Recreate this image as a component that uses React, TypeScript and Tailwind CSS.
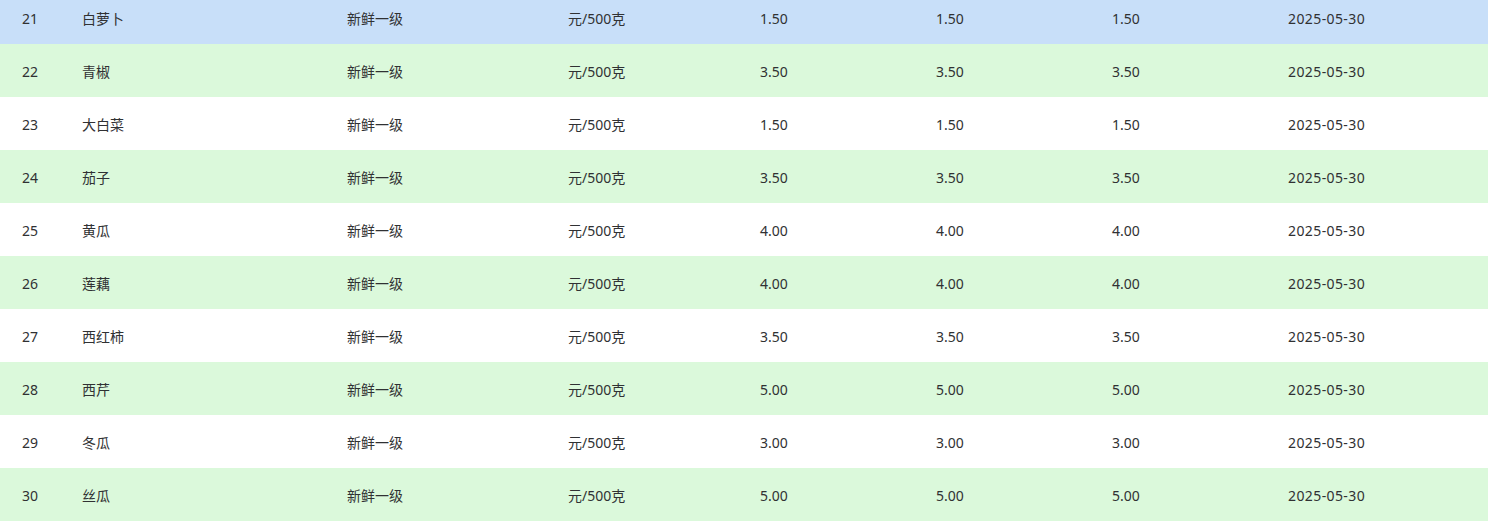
import React from 'react';

type Row = {
  id: number;
  name: string;
  price: string;
};

const rows: Row[] = [
  { id: 21, name: '白萝卜', price: '1.50' },
  { id: 22, name: '青椒', price: '3.50' },
  { id: 23, name: '大白菜', price: '1.50' },
  { id: 24, name: '茄子', price: '3.50' },
  { id: 25, name: '黄瓜', price: '4.00' },
  { id: 26, name: '莲藕', price: '4.00' },
  { id: 27, name: '西红柿', price: '3.50' },
  { id: 28, name: '西芹', price: '5.00' },
  { id: 29, name: '冬瓜', price: '3.00' },
  { id: 30, name: '丝瓜', price: '5.00' },
];

const App: React.FC = () => {
  return (
    <div
      className="w-[1488px] h-[524px] overflow-hidden bg-white text-[14px] text-[#303133]"
      style={{ fontFamily: '"Noto Sans", "Noto Sans CJK SC", sans-serif' }}
    >
      <div className="-mt-[9px]">
        {rows.map((row, i) => (
          <div
            key={row.id}
            className={`grid grid-cols-[60px_265px_221px_192px_176px_176px_176px_1fr] items-center h-[53px] pl-[22px] pt-[2px] ${
              i === 0 ? 'bg-[#c8dff9]' : i % 2 === 1 ? 'bg-[#dbf9db]' : 'bg-white'
            }`}
          >
            <span>{row.id}</span>
            <span>{row.name}</span>
            <span>新鲜一级</span>
            <span>元/500克</span>
            <span>{row.price}</span>
            <span>{row.price}</span>
            <span>{row.price}</span>
            <span className="tracking-[0.4px]">2025-05-30</span>
          </div>
        ))}
      </div>
    </div>
  );
};

export default App;
